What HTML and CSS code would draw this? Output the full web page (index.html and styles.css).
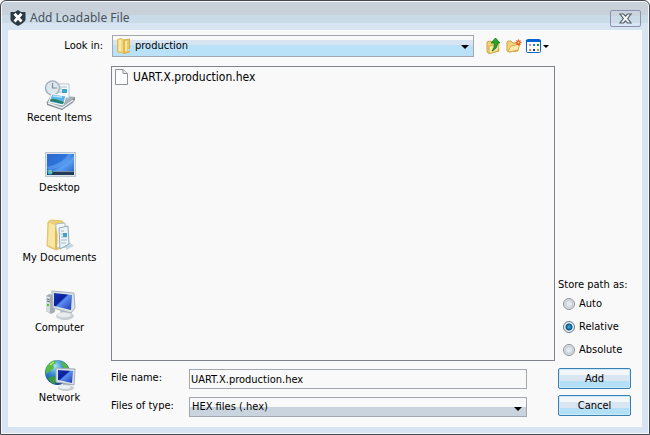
FILE: index.html
```html
<!DOCTYPE html>
<html lang="en">
<head>
    <meta charset="UTF-8">
    <meta name="viewport" content="width=device-width, initial-scale=1.0">
    <title>Add Loadable File</title>
    <link rel="stylesheet" href="styles.css">
</head>
<body>
    <div class="dialog">
        <!-- Title Bar -->
        <div class="title-bar">
            <svg class="app-icon" width="16" height="16" viewBox="0 0 16 16">
                <path d="M8 0 L11 2 L15.5 2 V10 Q14 13 8 16 Q2 13 .5 10 V2 L5 2 Z" fill="#2b3a44"/>
                <path d="M4.5 3.8 L11.5 11.5 M11.5 3.8 L4.5 11.5" stroke="#fff" stroke-width="2.8"/>
            </svg>
            <h1>Add Loadable File</h1>
            <button class="close-button" aria-label="Close">
                <svg width="13" height="11" viewBox="0 0 13 11">
                    <path d="M1 1 H4.5 L6.5 3.2 L8.5 1 H12 L8.7 5.5 L12 10 H8.5 L6.5 7.8 L4.5 10 H1 L4.3 5.5 Z" fill="#f4f6f8" stroke="#5a606e" stroke-width="1.2"/>
                </svg>
            </button>
        </div>

        <div class="content">
            <!-- Places -->
            <nav class="places">
                <button>
                    <svg width="32" height="32" viewBox="0 0 32 32">
                        <path d="M2 24 L8 15 L31 18 L29 24 L18 31 Z" fill="#a9b2ba"/>
                        <path d="M3 23 L18 28 L31 18 L31 21 L18 31 L3 26 Z" fill="#858e97"/>
                        <path d="M12 5 H25 V19 H12 Z" fill="#f8fbfd" stroke="#b8c5d0"/>
                        <path d="M14 8 H23 M14 10 H18 M14 13 H18" stroke="#a7bbcb"/>
                        <rect x="18" y="10" width="5" height="4" fill="#3aa6c8"/>
                        <circle cx="8.500" cy="9" r="7" fill="#dfe7ee" stroke="#a8b4c0" stroke-width="1.600"/>
                        <path d="M8.500 4 V9 H13" fill="none" stroke="#7d8da0" stroke-width="1.200"/>
                        <path d="M8 15 L22 17 L19 26 L5 23 Z" fill="#58b4e6" stroke="#fff"/>
                        <path d="M7 20 L11 20 L20 23 L19 25 L6 22 Z" fill="#2a7d66"/>
                        <path d="M9 17 L18 18" stroke="#b9e4f7" stroke-width="1.500"/>
                        <path d="M4 24 L18 29 L29 21" fill="none" stroke="#eef1f3" stroke-width="1.400"/>
                    </svg>
                    <span>Recent Items</span>
                </button>
                <button>
                    <svg width="32" height="32" viewBox="0 0 32 32">
                        <defs>
                            <linearGradient id="desk" x1="0" y1="0" x2="1" y2="1">
                                <stop offset="0" stop-color="#2c68c8"/>
                                <stop offset=".45" stop-color="#2e74df"/>
                                <stop offset=".6" stop-color="#5ca0f0"/>
                                <stop offset="1" stop-color="#245cc4"/>
                            </linearGradient>
                        </defs>
                        <rect x="1" y="3" width="31" height="25" fill="#bcc6d0"/>
                        <rect x="2" y="4" width="29" height="23" fill="#dde4ea"/>
                        <rect x="3" y="5" width="27" height="21" fill="url(#desk)"/>
                        <path d="M3 18 Q18 15 24 5 H28 Q23 17 5 21 Z" fill="#76b2f5" opacity=".45"/>
                        <rect x="3" y="22" width="27" height="4" fill="#243b55"/>
                        <path d="M9 22.500 H30" stroke="#7890a5"/>
                        <circle cx="6" cy="23" r="2.500" fill="#37bde0"/>
                        <path d="M5 22 H7 V24" fill="none" stroke="#e4b84a"/>
                    </svg>
                    <span>Desktop</span>
                </button>
                <button>
                    <svg width="32" height="32" viewBox="0 0 32 32">
                        <path d="M22 20 L30 27 L22 31 Z" fill="#c5d9e4"/>
                        <path d="M4 3 L7 1 L18 2 L21 5 L22 27 L12 31 L3 27 Z" fill="#ecd078" stroke="#e2c36a"/>
                        <path d="M5 4 L11 6 V29 L4 26 Z" fill="#f8e6a4"/>
                        <path d="M12 5 L21 4 L22 28 L12 29 Z" fill="#f6fafc" stroke="#a9bfca"/>
                        <path d="M15 9 L24 7 L25 25 L16 30 Z" fill="#eaf3f8" stroke="#93abb8"/>
                        <path d="M17 12 H20 M17 15 H22 M17 18 H23 M17 21 H23 M17 24 H22" stroke="#a6bdca"/>
                        <rect x="19" y="14" width="4" height="4" fill="#489fc6"/>
                        <path d="M11 8 Q15 12 13 30 L11 30 Z" fill="#dfb958"/>
                    </svg>
                    <span>My Documents</span>
                </button>
                <button>
                    <svg width="32" height="32" viewBox="0 0 32 32">
                        <defs>
                            <linearGradient id="screen" x1="0" y1="0" x2="1" y2="1">
                                <stop offset="0" stop-color="#1937b0"/>
                                <stop offset=".4" stop-color="#0a1e9c"/>
                                <stop offset=".48" stop-color="#5b8ff0"/>
                                <stop offset="1" stop-color="#1b36b8"/>
                            </linearGradient>
                        </defs>
                        <path d="M2 7 L5 5 L11 6 V23 L7 25 L2 22 Z" fill="#a4adb3"/>
                        <path d="M2 7 L6 8 V24 L2 22 Z" fill="#d5dbdf"/>
                        <path d="M3 10 L6 11 M3 12 L6 13" stroke="#626d75"/>
                        <path d="M3 16 H5" stroke="#43c63b" stroke-width="2"/>
                        <path d="M16 21 H24 V27 H17 Z" fill="#b5bfc6"/>
                        <ellipse cx="21" cy="27" rx="9" ry="4" fill="#c6ced3"/>
                        <ellipse cx="20" cy="26" rx="7" ry="2.500" fill="#e7ebed"/>
                        <path d="M8 2 L30 4 L31 19 L27 24 L9 19 Z" fill="#dbe2e6" stroke="#a7b2b9"/>
                        <path d="M10 4 L28 6 L27 21 L10 17 Z" fill="url(#screen)"/>
                    </svg>
                    <span>Computer</span>
                </button>
                <button>
                    <svg width="32" height="32" viewBox="0 0 32 32">
                        <defs>
                            <radialGradient id="globe" cx=".4" cy=".25" r=".8">
                                <stop offset="0" stop-color="#a6e4fa"/>
                                <stop offset=".45" stop-color="#3285cc"/>
                                <stop offset="1" stop-color="#173f8d"/>
                            </radialGradient>
                        </defs>
                        <circle cx="13.500" cy="13.500" r="12.500" fill="url(#globe)"/>
                        <path d="M2 9 Q6 2 11 1 L12 4 L9 6 L10 9 L6 12 L2 15 Z" fill="#59bc3c"/>
                        <path d="M17 2 L22 5 L25 10 L20 9 L18 6 Z" fill="#55b83d"/>
                        <path d="M4 19 L9 17 L12 20 L11 25 Q6 24 4 19 Z" fill="#3b9e37"/>
                        <path d="M6 6 L10 3" stroke="#b8ec79" stroke-width="1.500"/>
                        <path d="M19 24 H26 V29 H19 Z" fill="#aeb9c1"/>
                        <ellipse cx="22" cy="29" rx="8" ry="3" fill="#c4ccd1"/>
                        <ellipse cx="21" cy="28" rx="6" ry="2" fill="#eceff1"/>
                        <path d="M12 9 L31 10 L30 26 L12 23 Z" fill="#dce3e8" stroke="#9fabb4"/>
                        <path d="M14 11 L29 12 L28 24 L14 21 Z" fill="url(#screen)"/>
                    </svg>
                    <span>Network</span>
                </button>
            </nav>

            <!-- Look In -->
            <label class="look-label" for="lookIn">Look in:</label>
            <div class="toolbar">
                <div class="select-box look-in">
                    <svg class="folder-icon" width="16" height="16" viewBox="0 0 16 16">
                        <path d="M1.500 1.500 L5 .5 L8 2 V15 L1.500 14 Z" fill="#f2d87d" stroke="#dfbd59"/>
                        <path d="M8 2 L13.500 1 V14 L8 15.500 Z" fill="#ecc962" stroke="#d5ad46"/>
                        <path d="M4 2 V13 M10 3 V13" stroke="#fbf0b8" stroke-width="1.500"/>
                        <path d="M12 12 H14" stroke="#b9d9e8" stroke-width="2"/>
                    </svg>
                    <select id="lookIn">
                        <option>production</option>
                    </select>
                </div>
                <div class="tools">
                    <button aria-label="Up One Level">
                        <svg width="16" height="16" viewBox="0 0 16 16">
                            <path d="M1 4 L4 3 L6 4 H12 L13 13 L3 15.500 L1 14 Z" fill="#f0d27a" stroke="#cfa23d"/>
                            <path d="M3 8 L13 6 L12 13 L3 15.500 Z" fill="#fae8a4" stroke="#d6ad4d"/>
                            <path d="M6 13 Q8.500 10 8.500 5 H5 L9.500 0 L14 5 H11.500 Q11.500 11 6 13 Z" fill="#29a329" stroke="#147a1c" stroke-width=".8"/>
                        </svg>
                    </button>
                    <button aria-label="Create New Folder">
                        <svg width="16" height="16" viewBox="0 0 16 16">
                            <path d="M1 4 L2 3 H5 L7 5 H12 V13 L3 14 L1 13 Z" fill="#f2d37d" stroke="#d2a342"/>
                            <path d="M2 13 L5 8 L14 6 L12 12 L3 14 Z" fill="#fbeaad" stroke="#d9ae50"/>
                            <path d="M12.500 1.500 V7.500 M9.500 4.500 H15.500 M10.500 2.500 L14.500 6.500 M14.500 2.500 L10.500 6.500" stroke="#ec5a20" stroke-width="1.200"/>
                            <circle cx="12.500" cy="4.500" r="1" fill="#ffd28a"/>
                        </svg>
                    </button>
                    <button aria-label="View Menu">
                        <svg width="24" height="16" viewBox="0 0 24 16">
                            <rect x=".5" y="1.500" width="14" height="13" rx="1" fill="#fff" stroke="#0a62cf"/>
                            <path d="M0 3 H15" stroke="#0a62cf" stroke-width="2"/>
                            <path d="M3 7 H5" stroke="#9a9ac0" stroke-width="2"/>
                            <path d="M7 7 H9" stroke="#2476d8" stroke-width="2"/>
                            <path d="M11 7 H13" stroke="#1a9a2e" stroke-width="2"/>
                            <path d="M3 12 H5" stroke="#dc8a5c" stroke-width="2"/>
                            <path d="M7 12 H9" stroke="#123f86" stroke-width="2"/>
                            <path d="M11 12 H13" stroke="#c69a12" stroke-width="2"/>
                            <path d="M17 7 H23 L20 10 Z" fill="#000"/>
                        </svg>
                    </button>
                </div>
            </div>

            <!-- File List -->
            <ul class="file-list">
                <li>
                    <svg width="16" height="16" viewBox="0 0 16 16">
                        <path d="M1.500 .5 H9 L13.500 4.500 V15.500 H1.500 Z" fill="#fdfdfd" stroke="#8f9296"/>
                        <path d="M9 .5 V4.500 H13.500" fill="#e6e8ea" stroke="#8f9296"/>
                    </svg>
                    <span>UART.X.production.hex</span>
                </li>
            </ul>

            <!-- Path Options -->
            <fieldset class="path-options">
                <legend>Store path as:</legend>
                <label><input type="radio" name="path">Auto</label>
                <label><input type="radio" name="path" checked>Relative</label>
                <label><input type="radio" name="path">Absolute</label>
            </fieldset>

            <!-- File Fields -->
            <div class="fields">
                <label for="fileName">File name:</label>
                <input type="text" id="fileName" value="UART.X.production.hex">
                <label for="fileType">Files of type:</label>
                <div class="select-box">
                    <select id="fileType">
                        <option>HEX files (.hex)</option>
                    </select>
                </div>
            </div>
            <div class="actions">
                <button>Add</button>
                <button>Cancel</button>
            </div>
        </div>
    </div>
</body>
</html>
```

FILE: styles.css
```css
/* General Styles */
* {
    box-sizing: border-box;
}

body {
    margin: 0;
    background-color: #fff;
    font-family: Tahoma, "DejaVu Sans Condensed", "Noto Sans", sans-serif;
    font-size: 11px;
    line-height: 14px;
    color: #000;
}

button, input, select {
    font: inherit;
    color: inherit;
    margin: 0;
}

svg {
    display: block;
    flex: none;
}

/* Dialog Frame */
.dialog {
    display: flex;
    flex-direction: column;
    min-height: 100vh;
    padding: 0 6px 7px;
    border: 1px solid #44474c;
    border-radius: 6px 6px 0 0;
    box-shadow: inset 0 0 0 1px #f4f8fc;
    background: linear-gradient(#c8d0da 14px, #c9dbe7 14px, #c9dbe7 22px, #d7e4f2 22px);
}

.title-bar {
    display: flex;
    align-items: center;
    height: 29px;
    padding: 5px 2px 0 3px;
}

.title-bar h1 {
    flex: 1;
    margin: 0 0 0 4px;
    font-family: "Segoe UI", "Noto Sans", sans-serif;
    font-size: 12px;
    font-weight: normal;
    color: #4c5058;
}

.close-button {
    display: flex;
    align-items: center;
    justify-content: center;
    width: 31px;
    height: 17px;
    padding: 0;
    border: 1px solid #8b93ad;
    border-radius: 2px;
    background: linear-gradient(#cbd4de 5px, #cbdce8 5px, #cbdce8 12px, #d9e5f2 12px);
}

/* Content */
.content {
    flex: 1;
    display: grid;
    grid-template-columns: 103px 1fr 87px;
    grid-template-rows: 36px 1fr 66px;
    margin: 0 1px;
    background-color: #f9f9f9;
}

.places {
    grid-column: 1;
    grid-row: 1 / 4;
    display: flex;
    flex-direction: column;
    gap: 20px;
    padding-top: 49px;
}

.places button {
    display: flex;
    flex-direction: column;
    align-items: center;
    height: 50px;
    padding: 0;
    border: none;
    background: none;
    white-space: nowrap;
}

/* Toolbar */
.look-label {
    grid-column: 1;
    grid-row: 1;
    justify-self: end;
    margin: 9px 8px 0 0;
}

.toolbar {
    grid-column: 2 / 4;
    grid-row: 1;
    display: flex;
    align-items: flex-start;
    padding: 5px 92px 0 1px;
}

.select-box {
    position: relative;
}

.select-box select {
    display: block;
    width: 100%;
    height: 20px;
    padding: 0 20px 0 2px;
    border: 1px solid #a3a7ae;
    border-radius: 0;
    appearance: none;
    background: linear-gradient(#f9f9f9 50%, #cad4de 50%);
}

.select-box::after {
    content: "";
    position: absolute;
    right: 5px;
    bottom: 6px;
    border: 4px solid transparent;
    border-top-color: #000;
    border-bottom: none;
}

.look-in {
    flex: 1;
}

.look-in select {
    height: 22px;
    padding-left: 22px;
    background: linear-gradient(#f9f9f9 4px, #d7e4f2 4px, #d7e4f2 9px, #b9e2f8 9px);
}

.look-in::after {
    bottom: 8px;
}

.folder-icon {
    position: absolute;
    left: 4px;
    top: 3px;
}

.tools {
    display: flex;
    gap: 4px;
    margin: 3px 0 0 12px;
}

.tools button {
    padding: 0;
    border: none;
    background: none;
}

/* File List */
.file-list {
    grid-column: 2;
    grid-row: 2;
    margin: 0;
    padding: 2px;
    border: 1px solid #7f848c;
    list-style-type: none;
    font-size: 12px;
}

.file-list li {
    display: flex;
    align-items: center;
    gap: 3px;
}

/* Path Options */
.path-options {
    grid-column: 3;
    grid-row: 2;
    align-self: end;
    margin: 0;
    padding: 0 0 0 3px;
    border: none;
    white-space: nowrap;
}

.path-options legend {
    padding: 0;
}

.path-options label {
    display: flex;
    align-items: center;
    gap: 4px;
    height: 23px;
    padding-left: 5px;
}

.path-options input {
    width: 12px;
    height: 12px;
    border: 1px solid #8a9098;
    border-radius: 50%;
    appearance: none;
    background: radial-gradient(circle, #e4e9ee 2px, #c3cad2 4px, #f5f6f7 5px);
}

.path-options input:checked {
    border-color: #5c7c96;
    background: radial-gradient(circle at 50% 50%, #2a9fd8 1px, #0e4c78 3px, #f0f4f7 4px);
}

/* Fields */
.fields {
    grid-column: 2;
    grid-row: 3;
    display: grid;
    grid-template-columns: 78px 1fr;
    grid-auto-rows: 20px;
    row-gap: 8px;
    padding: 8px 28px 0 0;
}

.fields label {
    margin-top: 2px;
}

.fields input {
    width: 100%;
    height: 20px;
    padding: 0 1px;
    border: 1px solid #a3a7ae;
    background-color: #f9f9f9;
}

/* Action Buttons */
.actions {
    grid-column: 3;
    grid-row: 3;
    display: flex;
    flex-direction: column;
    gap: 6px;
    padding: 7px 11px 0 3px;
}

.actions button {
    height: 21px;
    padding: 0;
    border: 1px solid #3c7fb1;
    border-radius: 2px;
    box-shadow: inset 0 0 0 1px #c9eafa;
    background: linear-gradient(#f4f7fa 6px, #d9e5f1 6px, #d9e5f1 12px, #b4e0f7 12px);
}
```
